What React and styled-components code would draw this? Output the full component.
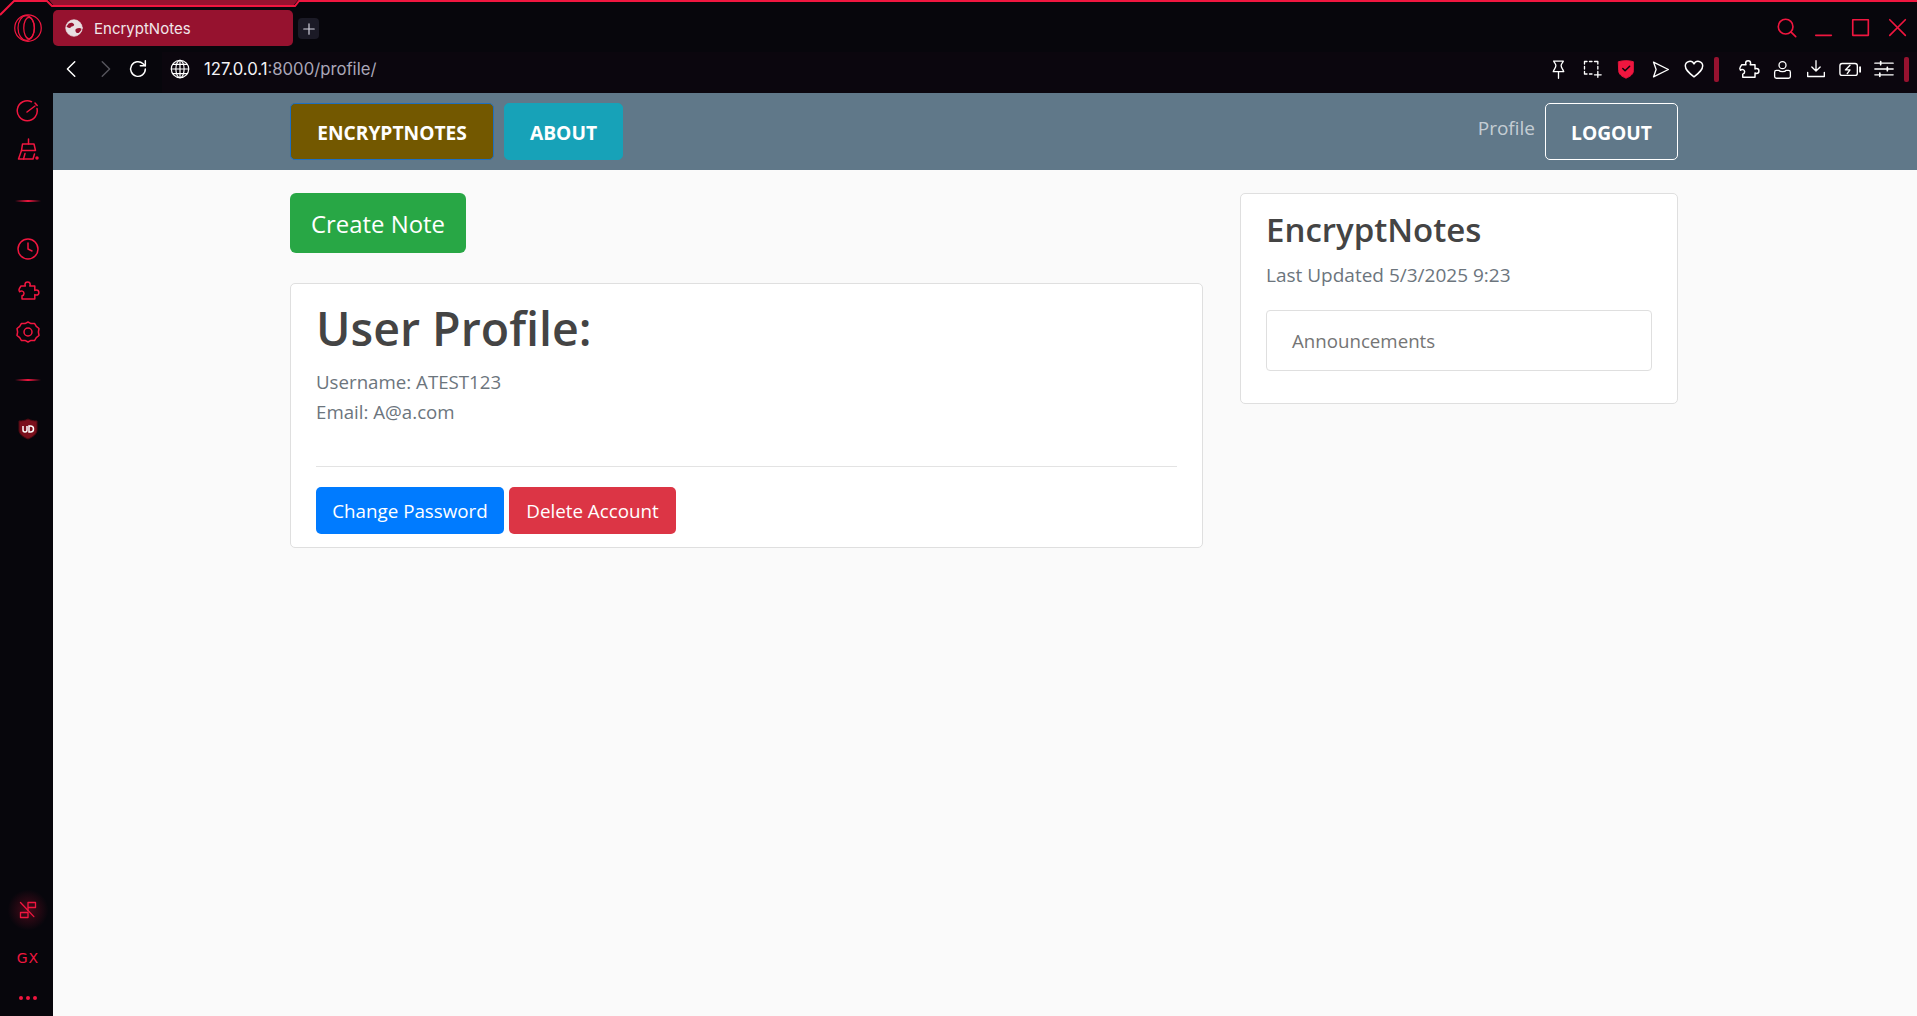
import React from "react";
import styled, { createGlobalStyle } from "styled-components";

const RED = "#f0163f";
const FONT = `"Open Sans", "Noto Sans", sans-serif`;

const GlobalStyle = createGlobalStyle`
  html, body { margin: 0; padding: 0; height: 100%; background: #07060c; }
  body { font-family: ${FONT}; overflow: hidden; }
  * { box-sizing: border-box; }
`;

const Icon = ({ size = 24, color = "#fff", sw = 1.6, vb = 24, fill = "none", children }) => (
  <svg width={size} height={size} viewBox={`0 0 ${vb} ${vb}`} fill={fill} stroke={color} strokeWidth={sw} strokeLinecap="round" strokeLinejoin="round">
    {children}
  </svg>
);

const PUZZLE = "M9 5.500a2.600 2.600 0 0 1 5.200 0c0 .6-.2 1-.4 1.500h5v4.400c.5-.3 1-.5 1.500-.5a2.600 2.600 0 0 1 0 5.200c-.5 0-1-.2-1.500-.5V20H6v-3.200c.9-.2 2-1 2-2.400a2.600 2.600 0 0 0-4.400-1.700c-1-1.400-.6-2.600-.2-3.200L5 7h4.400C9.200 6.500 9 6 9 5.500z";

const App = () => (
  <Shell>
    <GlobalStyle />
    <TopAccent width="1917" height="16" viewBox="0 0 1917 16">
      <path d="M49 0 L54 6 L293 6 L298 0 Z" fill="#96122f" />
      <path d="M0 15 L14 1 L47 1 L52 6 L295 6 L299 1 L1917 1" fill="none" stroke={RED} strokeWidth="2" />
    </TopAccent>

    <Sidebar>
      <SideSlot $h={56}>
        <Icon size={30} color={RED} sw={1}>
          <circle cx="12" cy="12" r="10.600" />
          <ellipse cx="12.800" cy="12" rx="4.200" ry="8.600" />
          <ellipse cx="10.600" cy="12" rx="6.600" ry="9.800" />
        </Icon>
      </SideSlot>
      <SideGap $h={33} />
      <SideSlot $h={44}>
        <Icon color={RED} sw={1.5}>
          <path d="M21 9.500A10 10 0 1 1 15.500 2.700" />
          <path d="M11 13l8-6" />
          <path d="M19 4l2.200 2.500" />
        </Icon>
      </SideSlot>
      <SideSlot $h={34}>
        <Icon color={RED} sw={1.5}>
          <path d="M12.500 1v5" />
          <path d="M6.500 6H18l1.500 6.500H5.500z" />
          <path d="M5.500 12.500L2.500 21H17l1.500-5" />
          <path d="M9 15.500L7.500 21" />
          <circle cx="21" cy="20" r="1" fill={RED} />
        </Icon>
      </SideSlot>
      <SideDivider $top={33} />
      <SideGap $h={29} />
      <SideSlot $h={36}>
        <Icon color={RED} sw={1.5}>
          <circle cx="12" cy="12" r="10" />
          <path d="M12 6v6l4 2" />
        </Icon>
      </SideSlot>
      <SideGap $h={6} />
      <SideSlot $h={36}>
        <Icon color={RED} sw={1.5}>
          <path d={PUZZLE} />
        </Icon>
      </SideSlot>
      <SideGap $h={5} />
      <SideSlot $h={36}>
        <Icon color={RED} sw={1.5}>
          <path d="M12 2l3 1.600 3.500-.2 1.800 3 2.700 2.100-.6 3.500.6 3.500-2.700 2.100-1.800 3-3.500-.2-3 1.600-3-1.600-3.500.2-1.800-3L1 15.500l.6-3.500L1 8.500l2.700-2.100 1.800-3 3.500.2z" />
          <circle cx="12" cy="12" r="4" />
        </Icon>
      </SideSlot>
      <SideDivider $top={29} />
      <SideGap $h={30} />
      <SideSlot $h={36}>
        <Shield />
      </SideSlot>
      <Grow />
      <MusicGlow>
        <Icon size={20} color={RED} sw={1.6}>
          <path d="M3 3l16 17" />
          <path d="M12 13V3h9v6h-9" />
          <path d="M3 15h9v6H3z" />
        </Icon>
      </MusicGlow>
      <GxLabel>GX</GxLabel>
      <Dots>
        <i /><i /><i />
      </Dots>
    </Sidebar>

    <Window>
      <TabStrip>
        <Tab>
          <Icon size={18} color="#e8dfe2" sw={1} vb={24}>
            <circle cx="12" cy="12" r="11" fill="#e8dfe2" />
            <path d="M5 6c3-2 6-1 7 1s-2 3-3 3-1 2-3 2-3-1-4-2zM22 13c-2-2-5-1-7 0s-1 4 0 5 3 1 4 0 3-3 3-5z" fill="#96122f" stroke="none" />
          </Icon>
          <TabTitle>EncryptNotes</TabTitle>
        </Tab>
        <NewTab>
          <Icon size={14} color="#d5d4e0" sw={2}>
            <path d="M12 3v18M3 12h18" />
          </Icon>
        </NewTab>
        <WindowControls>
          <Icon size={22} color={RED} sw={1.8}>
            <circle cx="10.500" cy="10.500" r="8" />
            <path d="M16.500 16.500l5 5" />
          </Icon>
          <Icon size={22} color={RED} sw={1.8}>
            <path d="M3 20h17" />
          </Icon>
          <Icon size={22} color={RED} sw={1.8}>
            <rect x="3" y="3" width="17" height="17" />
          </Icon>
          <Icon size={22} color={RED} sw={1.8}>
            <path d="M3 3l17 17M20 3L3 20" />
          </Icon>
        </WindowControls>
      </TabStrip>

      <AddressBar>
        <NavArrows>
          <Icon size={22} color="#fff" sw={1.6}><path d="M15 4l-8 8 8 8" /></Icon>
          <Icon size={22} color="#55545c" sw={1.6}><path d="M9 4l8 8-8 8" /></Icon>
          <Icon size={22} color="#fff" sw={1.6}>
            <path d="M20 12a8 8 0 1 1-2.500-5.800L20 8.500" />
            <path d="M20 3v5.500h-5.500" />
          </Icon>
        </NavArrows>
        <UrlField>
          <Icon size={22} color="#fff" sw={1.3}>
            <circle cx="12" cy="12" r="9.500" />
            <ellipse cx="12" cy="12" rx="4.500" ry="9.500" />
            <path d="M2.500 12h19M4 7h16M4 17h16M12 2.500v19" />
          </Icon>
          <UrlText>127.0.0.1<UrlRest>:8000/profile/</UrlRest></UrlText>
        </UrlField>
        <Extensions>
          <ExtSlot>
            <Icon size={21} sw={1.5}>
              <path d="M6.500 2.500h11c-1 2-2.500 3-2.500 5 0 2.500 2 4 3 7H6c1-3 3-4.500 3-7 0-2-1.500-3-2.500-5zM12 14.500V22" />
            </Icon>
          </ExtSlot>
          <ExtSlot>
            <Icon size={20} sw={1.6}>
              <path d="M3 6V3h3M9 3h3M15 3h4v3M19 9v3M3 9v3M3 15v3h3M9 18h3M19 15v7M15 19h8" />
            </Icon>
          </ExtSlot>
          <ExtSlot>
            <Icon size={22} color={RED} fill={RED} sw={1}>
              <path d="M4 4c5-1.500 11-1.500 16 0v10c0 4-4 6.500-8 8-4-1.500-8-4-8-8z" />
              <path d="M8.500 11.500l2.500 2.500 5-5" stroke="#07060c" strokeWidth="1.600" fill="none" />
            </Icon>
          </ExtSlot>
          <ExtSlot>
            <Icon size={21} sw={1.5}>
              <path d="M4 3.500L21 12 4 20.500 7 12z" />
            </Icon>
          </ExtSlot>
          <ExtSlot>
            <Icon size={22} sw={1.6}>
              <path d="M12 20.500C6 16 2.500 13 2.500 8.500A5 5 0 0 1 12 6.500a5 5 0 0 1 9.500 2C21.500 13 18 16 12 20.500z" />
            </Icon>
          </ExtSlot>
          <RedBar />
          <ExtSlot>
            <Icon size={23} sw={1.5}>
              <path d={PUZZLE} />
            </Icon>
          </ExtSlot>
          <ExtSlot>
            <Icon size={21} sw={1.5}>
              <circle cx="12" cy="7" r="4" />
              <path d="M8 13H5a2 2 0 0 0-2 2v5a2 2 0 0 0 2 2h14a2 2 0 0 0 2-2v-5a2 2 0 0 0-2-2h-3c-1 2-7 2-8 0z" />
            </Icon>
          </ExtSlot>
          <ExtSlot>
            <Icon size={20} sw={1.6}>
              <path d="M12 2v12M7 9.500l5 5 5-5M2 16v5h20v-5" />
            </Icon>
          </ExtSlot>
          <ExtSlot>
            <Icon size={22} sw={1.5}>
              <rect x="1" y="6" width="19" height="13" rx="2.500" />
              <path d="M12 8l-5 5h5l-3 4" />
              <path d="M23 10v5" strokeWidth="2" />
            </Icon>
          </ExtSlot>
          <ExtSlot>
            <Icon size={20} sw={1.6}>
              <path d="M1 5h22M1 12h22M1 19h22" />
              <path d="M8 3v4M16 10v4M7 17v4" strokeWidth="2" />
            </Icon>
          </ExtSlot>
          <RedBar />
        </Extensions>
      </AddressBar>

      <Page>
        <NavBar>
          <NavInner>
            <NavButton $bg="#735800" $line="#1f6fc0" $w={204}>EncryptNotes</NavButton>
            <NavButton $bg="#17a2b8" $line="#17a2b8" $w={119}>About</NavButton>
            <NavRight>
              <ProfileLink>Profile</ProfileLink>
              <NavButton $bg="transparent" $line="#fff" $w={133}>Logout</NavButton>
            </NavRight>
          </NavInner>
        </NavBar>
        <Columns>
          <MainColumn>
            <CreateButton>Create Note</CreateButton>
            <ProfileCard>
              <Title>User Profile:</Title>
              <InfoLine>Username: ATEST123</InfoLine>
              <InfoLine>Email: A@a.com</InfoLine>
              <Rule />
              <Actions>
                <ActionButton $bg="#007bff" $w={188}>Change Password</ActionButton>
                <ActionButton $bg="#dc3545" $w={167}>Delete Account</ActionButton>
              </Actions>
            </ProfileCard>
          </MainColumn>
          <AsideCard>
            <AsideTitle>EncryptNotes</AsideTitle>
            <Updated>Last Updated 5/3/2025 9:23</Updated>
            <AnnounceBox>Announcements</AnnounceBox>
          </AsideCard>
        </Columns>
      </Page>
    </Window>
  </Shell>
);

const Shield = () => (
  <svg width="20" height="22" viewBox="0 0 20 22">
    <path d="M10 1c3 1.500 6 2 9 2v9c0 4-4 7-9 9-5-2-9-5-9-9V3c3 0 6-.5 9-2z" fill="#7a0f1c" stroke="#4a0a12" />
    <path d="M5 8v4a2 2 0 0 0 4 0V8" fill="none" stroke="#fff" strokeWidth="1.500" />
    <path d="M11 8h1.500a2.800 2.800 0 0 1 0 6H11z" fill="none" stroke="#fff" strokeWidth="1.500" />
  </svg>
);

export default App;

const Shell = styled.div`
  position: relative;
  display: flex;
  width: 1917px;
  height: 1016px;
  overflow: hidden;
  background: #07060c;
`;

const TopAccent = styled.svg`
  position: absolute;
  top: 0;
  left: 0;
  z-index: 2;
`;

const Sidebar = styled.aside`
  display: flex;
  flex-direction: column;
  align-items: center;
  flex: 0 0 53px;
  width: 53px;
  padding-left: 3px;
`;

const SideSlot = styled.div`
  display: flex;
  align-items: center;
  justify-content: center;
  height: ${(p) => p.$h}px;
`;

const SideGap = styled.div`
  flex: 0 0 ${(p) => p.$h}px;
`;

const SideDivider = styled.div`
  flex: 0 0 2px;
  width: 26px;
  margin-top: ${(p) => p.$top}px;
  background: linear-gradient(90deg, transparent, ${RED}, transparent);
`;

const Grow = styled.div`
  flex: 1;
`;

const MusicGlow = styled.div`
  display: flex;
  align-items: center;
  justify-content: center;
  width: 40px;
  height: 40px;
  background: radial-gradient(circle, rgba(240, 22, 63, 0.28), transparent 72%);
`;

const GxLabel = styled.div`
  margin-top: 21px;
  color: ${RED};
  font: 400 14px/1 "DejaVu Sans", sans-serif;
  letter-spacing: 1px;
`;

const Dots = styled.div`
  display: flex;
  gap: 3px;
  margin: 31px 0 16px;

  i {
    width: 4px;
    height: 4px;
    border-radius: 50%;
    background: ${RED};
  }
`;

const Window = styled.div`
  display: flex;
  flex-direction: column;
  flex: 1;
  min-width: 0;
`;

const TabStrip = styled.div`
  display: flex;
  align-items: flex-start;
  flex: 0 0 52px;
  padding-top: 10px;
`;

const Tab = styled.div`
  display: flex;
  align-items: center;
  gap: 11px;
  width: 240px;
  height: 36px;
  padding-left: 12px;
  border-radius: 5px;
  background: #96122f;
`;

const TabTitle = styled.span`
  color: #f1e6e9;
  font: 400 15px/1 Inter, sans-serif;
`;

const NewTab = styled.div`
  display: flex;
  align-items: center;
  justify-content: center;
  width: 21px;
  height: 21px;
  margin: 8px 0 0 5px;
  border-radius: 4px;
  background: #1b1a26;
`;

const WindowControls = styled.div`
  display: flex;
  align-items: center;
  gap: 15px;
  margin: 7px 8px 0 auto;
`;

const AddressBar = styled.div`
  display: flex;
  align-items: stretch;
  flex: 0 0 41px;
  padding-left: 8px;
`;

const NavArrows = styled.div`
  display: flex;
  align-items: center;
  gap: 11px;
  width: 101px;
  padding-bottom: 7px;
`;

const UrlField = styled.div`
  display: flex;
  align-items: center;
  gap: 13px;
  flex: 1;
  padding: 0 0 7px 7px;
  background: #0b060e;
`;

const UrlText = styled.span`
  color: #f4f3f6;
  font: 400 16.700px/1 Inter, sans-serif;
`;

const UrlRest = styled.span`
  color: #aaa6b8;
`;

const Extensions = styled.div`
  display: flex;
  align-items: center;
  padding: 0 8px 7px 0;
  background: #0b060e;
`;

const ExtSlot = styled.div`
  display: flex;
  align-items: center;
  justify-content: center;
  width: 34px;
`;

const RedBar = styled.div`
  width: 5px;
  height: 25px;
  margin: 0 12px 0 3px;
  border-radius: 2px;
  background: #96122f;

  &:last-child {
    margin-right: 0;
  }
`;

const Page = styled.main`
  flex: 1;
  background: #fafafa;
`;

const NavBar = styled.nav`
  height: 77px;
  padding: 10px 0 0 237px;
  background: #607889;
`;

const NavInner = styled.div`
  display: flex;
  gap: 10px;
  width: 1388px;
`;

const NavRight = styled.div`
  display: flex;
  gap: 10px;
  margin-left: auto;
`;

const NavButton = styled.a`
  display: flex;
  align-items: center;
  justify-content: center;
  width: ${(p) => p.$w}px;
  height: 57px;
  padding-top: 2px;
  border: 1px solid ${(p) => p.$line};
  border-radius: 5px;
  background: ${(p) => p.$bg};
  color: #fff;
  font-size: 19.200px;
  font-weight: 700;
  text-transform: uppercase;
`;

const ProfileLink = styled.span`
  padding-top: 12px;
  color: rgba(255, 255, 255, 0.65);
  font-size: 19px;
  line-height: 26px;
`;

const Columns = styled.div`
  display: flex;
  align-items: flex-start;
  gap: 37px;
  width: 1388px;
  margin: 23px 0 0 237px;
`;

const MainColumn = styled.div`
  display: flex;
  flex-direction: column;
  align-items: flex-start;
  gap: 30px;
  flex: 0 0 913px;
`;

const CreateButton = styled.button`
  height: 60px;
  padding: 0 21px;
  border: 0;
  border-radius: 6px;
  background: #28a745;
  color: #fff;
  font-family: ${FONT};
  font-size: 23.900px;
`;

const Card = styled.section`
  border: 1px solid #dfdfdf;
  border-radius: 5px;
  background: #fff;
`;

const ProfileCard = styled(Card)`
  align-self: stretch;
  height: 265px;
  padding: 0 25px;
`;

const Title = styled.h1`
  margin: 12px 0 7px;
  color: #444;
  font-size: 46.500px;
  font-weight: 600;
  line-height: 64px;
`;

const InfoLine = styled.p`
  margin: 0;
  color: #6c757d;
  font-size: 18.700px;
  line-height: 30px;
`;

const Rule = styled.hr`
  margin: 39px 0 20px;
  border: 0;
  border-top: 1px solid #e3e3e3;
`;

const Actions = styled.div`
  display: flex;
  gap: 5px;
`;

const ActionButton = styled.button`
  width: ${(p) => p.$w}px;
  height: 47px;
  padding: 0;
  border: 0;
  border-radius: 5px;
  background: ${(p) => p.$bg};
  color: #fff;
  font-family: ${FONT};
  font-size: 18.800px;
`;

const AsideCard = styled(Card)`
  flex: 0 0 438px;
  height: 211px;
  padding: 0 25px;
`;

const AsideTitle = styled.h3`
  margin: 8px 0 0;
  color: #444;
  font-size: 33px;
  font-weight: 600;
  line-height: 56px;
`;

const Updated = styled.p`
  margin: 3px 0 0;
  color: #6c757d;
  font-size: 19px;
  line-height: 28px;
`;

const AnnounceBox = styled.div`
  display: flex;
  align-items: center;
  height: 61px;
  margin-top: 21px;
  padding-left: 25px;
  border: 1px solid #dfdfdf;
  border-radius: 4px;
  background: #fff;
  color: #757575;
  font-size: 18.700px;
`;
